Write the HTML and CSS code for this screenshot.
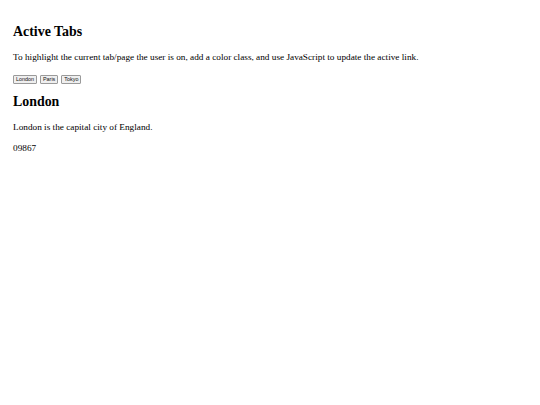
FILE: index.html
```html
<!DOCTYPE html>
<html>
<head>
<meta charset="utf-8">
<link rel="stylesheet" href="styles.css">
</head>
<body class="page">
<h2 class="title">Active Tabs</h2>
<p class="intro">To highlight the current tab/page the user is on, add a color class, and use JavaScript to update the active link.</p>
<div class="tabs">
  <button class="tab">London</button>
  <button class="tab">Paris</button>
  <button class="tab">Tokyo</button>
</div>
<div class="panel">
  <h2 class="city">London</h2>
  <p class="text">London is the capital city of England.</p>
  <p class="text code">09867</p>
</div>
</body>
</html>
```
FILE: styles.css
```css
html { background: #fff; }
.page {
  margin: 0;
  padding: 24px 13px 0;
  font-family: "Liberation Serif", "Times New Roman", serif;
  font-size: 9.25px;
  color: #000;
}
.title, .city {
  font-size: 13.9px;
  line-height: 16px;
  font-weight: bold;
  margin: 0;
}
.intro {
  margin: 12px 0 0;
  line-height: 11px;
}
.tabs {
  display: flex;
  gap: 3px;
  margin-top: 12px;
}
.tab {
  font-family: "Liberation Sans", Arial, sans-serif;
  font-size: 5.4px;
  line-height: 7px;
  padding: 0 2px;
  margin: 0;
  background: #efefef;
  border: 1px solid #9a9a9a;
  border-radius: 1px;
  color: #111;
}
.city { margin-top: 10px; }
.text {
  margin: 12px 0 0;
  line-height: 11px;
}
.code { margin-top: 9.5px; }
```
